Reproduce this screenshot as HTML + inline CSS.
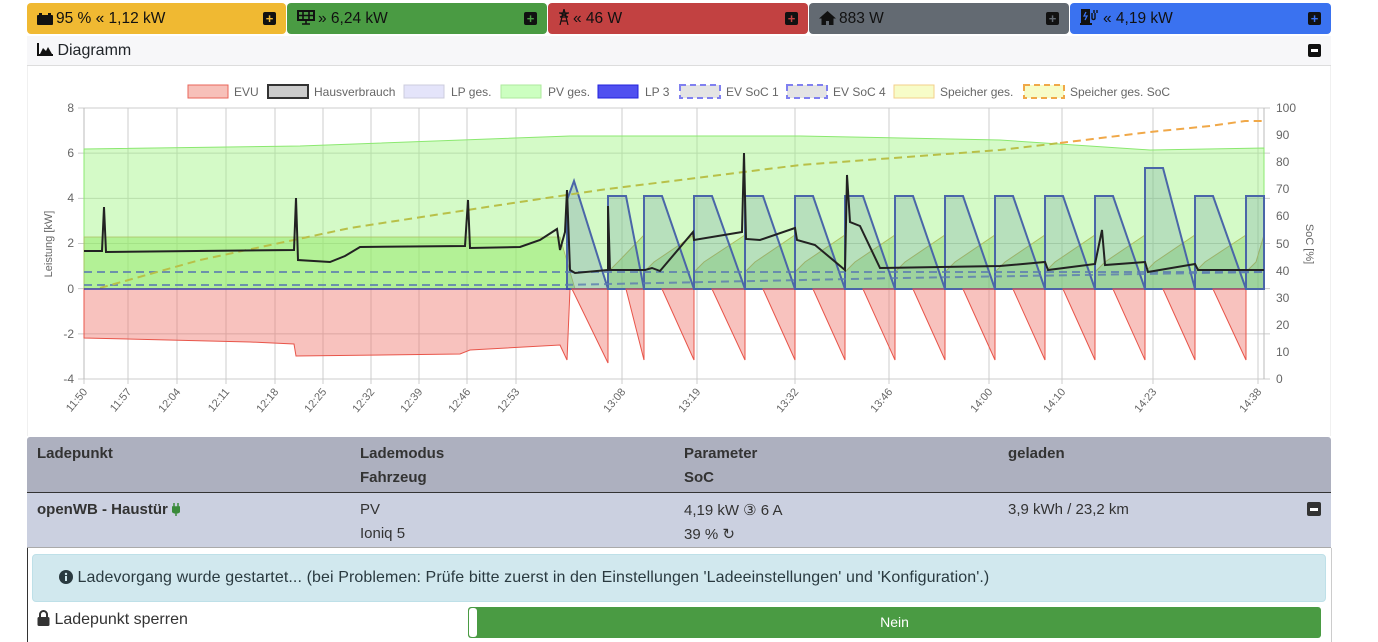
<!DOCTYPE html>
<html><head><meta charset="utf-8">
<style>
*{box-sizing:border-box;margin:0;padding:0}
body{width:1378px;height:642px;overflow:hidden;background:#fff;font-family:"Liberation Sans",sans-serif;color:#212529;position:relative}
.box{position:absolute;top:3px;height:31px;border-radius:4px;font-size:15.5px;line-height:31px;padding-left:10px;color:#111}
.box svg{vertical-align:-2px;margin-right:3px}
.pl{position:absolute;right:10px;top:9px;width:13px;height:13px;background:#111;border-radius:2px;color:#fff;font-size:13px;line-height:13px;text-align:center;font-weight:bold}
.abs{position:absolute}
.th{font-weight:bold;font-size:15px;color:#333}
.td{font-size:15px;color:#333}
</style></head><body>
<div class="box" style="left:27px;width:259px;background:#f0b932"><svg width="16" height="13" viewBox="0 0 16 13"><rect x="0" y="3" width="16" height="10" rx="1" fill="#111"/><rect x="2" y="1" width="3" height="2" fill="#111"/><rect x="11" y="1" width="3" height="2" fill="#111"/></svg>95 % « 1,12 kW<span class="pl" style="color:#f0b932">+</span></div>
<div class="box" style="left:287px;width:260px;background:#4a9b43"><svg width="18" height="15" viewBox="0 0 18 15"><rect x="1" y="1" width="16" height="9" fill="none" stroke="#111" stroke-width="2"/><path d="M6 1v9M12 1v9M1 5.5h16M9 10v4M5 14h8" stroke="#111" stroke-width="1.6"/></svg>» 6,24 kW<span class="pl" style="color:#4a9b43">+</span></div>
<div class="box" style="left:548px;width:260px;background:#c24141"><svg width="12" height="16" viewBox="0 0 12 16"><path d="M6 0L2 16M6 0l4 16M1 4h10M2 8h8M3 12h6M2 4l8 4M10 4l-8 4" stroke="#111" stroke-width="1.2" fill="none"/></svg>« 46 W<span class="pl" style="color:#c24141">+</span></div>
<div class="box" style="left:809px;width:260px;background:#636a72"><svg width="17" height="14" viewBox="0 0 17 14"><path d="M8.5 0L0 7.5h2.5V14h4.5V10h3v4h4.5V7.5H17z" fill="#111"/></svg>883 W<span class="pl" style="color:#636a72">+</span></div>
<div class="box" style="left:1070px;width:261px;background:#3a72f0"><svg width="20" height="16" viewBox="0 0 20 16"><rect x="1" y="0" width="9" height="14" fill="#111"/><rect x="0" y="14" width="12" height="2" fill="#111"/><path d="M6 3L4 7h3l-2 4" stroke="#3a72f0" stroke-width="1.3" fill="none"/><path d="M12 4v5c0 2 3 2 3 0V4M14 1v3M17 1v3" stroke="#111" stroke-width="1.4" fill="none"/></svg>« 4,19 kW<span class="pl" style="color:#3a72f0">+</span></div>

<div class="abs" style="left:27px;top:36px;width:1304px;height:30px;background:#f7f7f9;border-bottom:1px solid #ddd;font-size:16px;line-height:29px;padding-left:10px"><svg width="16" height="13" viewBox="0 0 16 13" style="vertical-align:-1px"><path d="M1 0v12h15" stroke="#111" stroke-width="2" fill="none"/><path d="M3 11l3-6 3 3 2-4 4 7z" fill="#111"/></svg> Diagramm<span class="abs" style="right:10px;top:8px;width:13px;height:13px;background:#111;border-radius:2px"><span class="abs" style="left:3px;top:5px;width:7px;height:3px;background:#fff"></span></span></div>
<div class="abs" style="left:27px;top:66px;width:1304px;height:370px;border-left:1px solid #f0f0f0;border-right:1px solid #f0f0f0"></div>

<svg class="abs" style="left:0;top:0" width="1378" height="436" font-family="Liberation Sans" font-size="12" fill="#666">
<g font-size="12">
<rect x="188" y="85" width="40" height="13" fill="#f7c0b9" stroke="#e8665a"/><text x="234" y="96">EVU</text>
<rect x="268" y="85" width="40" height="13" fill="#ccc" stroke="#333" stroke-width="2"/><text x="314" y="96">Hausverbrauch</text>
<rect x="404" y="85" width="40" height="13" fill="#e4e4fa" stroke="#ccd"/><text x="451" y="96">LP ges.</text>
<rect x="501" y="85" width="40" height="13" fill="#ccffc0" stroke="#aee89e"/><text x="548" y="96">PV ges.</text>
<rect x="598" y="85" width="40" height="13" fill="#5050f0" stroke="#2222dd"/><text x="645" y="96">LP 3</text>
<rect x="680" y="85" width="40" height="13" fill="#e4e4e4" stroke="#8080f0" stroke-dasharray="6,4" stroke-width="2"/><text x="726" y="96">EV SoC 1</text>
<rect x="787" y="85" width="40" height="13" fill="#e4e4e4" stroke="#8080f0" stroke-dasharray="6,4" stroke-width="2"/><text x="833" y="96">EV SoC 4</text>
<rect x="894" y="85" width="40" height="13" fill="#f7fcc8" stroke="#f3cf8a"/><text x="940" y="96">Speicher ges.</text>
<rect x="1024" y="85" width="40" height="13" fill="#f7fcc8" stroke="#f0a848" stroke-dasharray="6,4" stroke-width="2"/><text x="1070" y="96">Speicher ges. SoC</text>
</g>
<g stroke="#ccc" stroke-width="1" id="grid"></g>
<g id="plot"></g>
<g text-anchor="end">
<text x="74" y="112">8</text><text x="74" y="157">6</text><text x="74" y="202">4</text><text x="74" y="247">2</text><text x="74" y="293">0</text><text x="74" y="338">-2</text><text x="74" y="383">-4</text>
</g>
<g>
<text x="1276" y="112">100</text><text x="1276" y="139">90</text><text x="1276" y="166">80</text><text x="1276" y="193">70</text><text x="1276" y="220">60</text><text x="1276" y="248">50</text><text x="1276" y="275">40</text><text x="1276" y="302">30</text><text x="1276" y="329">20</text><text x="1276" y="356">10</text><text x="1276" y="383">0</text>
</g>
<text transform="translate(52,244) rotate(-90)" text-anchor="middle" font-size="11">Leistung [kW]</text>
<text transform="translate(1306,244) rotate(90)" text-anchor="middle" font-size="11">SoC [%]</text>
<g id="xl" text-anchor="end" font-size="11"></g>
</svg>

<div class="abs" style="left:27px;top:437px;width:1304px;height:56px;background:#adb0bf;border-radius:3px 3px 0 0;border-bottom:1px solid #333"></div>
<div class="abs th" style="left:37px;top:445px">Ladepunkt</div>
<div class="abs th" style="left:360px;top:445px">Lademodus</div>
<div class="abs th" style="left:360px;top:469px">Fahrzeug</div>
<div class="abs th" style="left:684px;top:445px">Parameter</div>
<div class="abs th" style="left:684px;top:469px">SoC</div>
<div class="abs th" style="left:1008px;top:445px">geladen</div>
<div class="abs" style="left:27px;top:493px;width:1304px;height:55px;background:#cbd0e0;border-bottom:1px solid #aaa"></div>
<div class="abs th" style="left:37px;top:501px">openWB - Haustür <svg width="8" height="13" viewBox="0 0 8 13" style="vertical-align:-2px"><path d="M2 0v4M6 0v4M0 4h8v3c0 2-2 3-4 3s-4-1-4-3zM4 10v3" stroke="#3a8a3a" stroke-width="1.5" fill="#3a8a3a"/></svg></div>
<div class="abs td" style="left:360px;top:501px">PV</div>
<div class="abs td" style="left:360px;top:525px">Ioniq 5</div>
<div class="abs td" style="left:684px;top:501px">4,19 kW ③ 6 A</div>
<div class="abs td" style="left:684px;top:525px">39 % ↻</div>
<div class="abs td" style="left:1008px;top:501px">3,9 kWh / 23,2 km</div>
<div class="abs" style="left:1307px;top:502px;width:14px;height:14px;background:#333;border-radius:2px"><span class="abs" style="left:3px;top:6px;width:8px;height:3px;background:#fff"></span></div>
<div class="abs" style="left:27px;top:548px;width:1px;height:94px;background:#333"></div>
<div class="abs" style="left:1331px;top:548px;width:1px;height:94px;background:#ccc"></div>
<div class="abs" style="left:32px;top:554px;width:1294px;height:48px;background:#d1e8ee;border:1px solid #bee0e8;border-radius:4px;font-size:16px;letter-spacing:0.1px;line-height:46px;padding-left:26px;color:#2a3a40"><svg width="14" height="14" viewBox="0 0 14 14" style="vertical-align:-2px"><circle cx="7" cy="7" r="7" fill="#2a3a40"/><rect x="6" y="6" width="2" height="5" fill="#d1e8ee"/><circle cx="7" cy="4" r="1.2" fill="#d1e8ee"/></svg> Ladevorgang wurde gestartet... (bei Problemen: Prüfe bitte zuerst in den Einstellungen 'Ladeeinstellungen' und 'Konfiguration'.)</div>
<div class="abs" style="left:37px;top:610px;font-size:16px;color:#333"><svg width="13" height="16" viewBox="0 0 13 16" style="vertical-align:-2px"><path d="M3 7V4.5a3.5 3.5 0 0 1 7 0V7" stroke="#333" stroke-width="2" fill="none"/><rect x="0.5" y="7" width="12" height="9" rx="1.5" fill="#333"/></svg> Ladepunkt sperren</div>
<div class="abs" style="left:468px;top:607px;width:853px;height:31px;background:#4a9b43;border-radius:3px;color:#fff;font-size:14px;text-align:center;line-height:31px">Nein</div>
<div class="abs" style="left:469px;top:608px;width:8px;height:29px;background:#fff;border-radius:3px"></div>

<script>
(function(){
var ns="http://www.w3.org/2000/svg";
function el(p,t,a){var e=document.createElementNS(ns,t);for(var k in a)e.setAttribute(k,a[k]);p.appendChild(e);return e;}
var g=document.getElementById('grid'),pl=document.getElementById('plot'),xl=document.getElementById('xl');
var xs=[[84,'11:50'],[128,'11:57'],[177,'12:04'],[226,'12:11'],[275,'12:18'],[323,'12:25'],[371,'12:32'],[419,'12:39'],[467,'12:46'],[516,'12:53'],[622,'13:08'],[697,'13:19'],[795,'13:32'],[889,'13:46'],[989,'14:00'],[1062,'14:10'],[1153,'14:23'],[1258,'14:38']];
for(var i=0;i<7;i++){var y=108+i*45.17;el(g,'line',{x1:78,x2:1270,y1:y,y2:y});}
xs.forEach(function(a){el(g,'line',{x1:a[0],x2:a[0],y1:108,y2:384});var t=el(xl,'text',{transform:'translate('+(a[0]+4)+',392) rotate(-50)'});t.textContent=a[1];});
el(g,'line',{x1:84,x2:84,y1:108,y2:379,stroke:'#bbb'});
el(g,'line',{x1:1264,x2:1264,y1:108,y2:379,stroke:'#bbb'});
el(pl,'path',{d:'M84,289 L84,149 L300,146 L570,136 L800,136 L1000,140 L1150,150 L1264,148 L1264,289Z',fill:'rgba(160,245,130,0.45)',stroke:'#8be870'});
el(pl,'path',{d:'M84,289 L84,237 L560,237 L575,289Z',fill:'rgba(140,230,90,0.45)',stroke:'#aac060','stroke-width':0.8});
el(pl,'path',{d:'M84,289 L84,338 L250,342 L294,344 L296,356 L460,354 L470,350 L560,345 L567,360 L570,289Z',fill:'rgba(240,120,110,0.45)',stroke:'#e8554a','stroke-width':1});
var st=[608,644,694,745,795,845,895,945,995,1045,1095,1145,1195,1246,1296];
el(pl,'path',{d:'M567,289 L567,200 L574,181 L608,289Z',fill:'rgba(80,120,160,0.25)',stroke:'#4a66a8','stroke-width':2});
el(pl,'path',{d:'M572,289 L608,363 L608,289Z',fill:'rgba(240,120,110,0.45)',stroke:'#e8554a','stroke-width':1});
for(var i=0;i<st.length-1;i++){var x=st[i],n=Math.min(st[i+1],1264),tp=(x==1145?168:196);
 var d='M'+x+',289 L'+x+','+tp+' L'+(x+18)+','+tp+' L'+n+','+(n==1264?tp:289);
 if(n==1264)d+=' L1264,289';
 el(pl,'path',{d:'M'+x+',289 L'+x+',272 L'+(x+10)+',262 L'+n+',235 L'+n+',289Z',fill:'rgba(120,200,90,0.35)',stroke:'#b0c060','stroke-width':1});
 el(pl,'path',{d:d+'Z',fill:'rgba(80,130,150,0.22)',stroke:'#4a66a8','stroke-width':2});
 if(n<1264)el(pl,'path',{d:'M'+(x+18)+',289 L'+n+',360 L'+n+',289Z',fill:'rgba(240,120,110,0.45)',stroke:'#e8554a','stroke-width':1});
}
el(pl,'path',{d:'M84,272 L1264,272',stroke:'#5a7ab0','stroke-width':2,'stroke-dasharray':'8,5',fill:'none',opacity:.8});
el(pl,'path',{d:'M84,285 L560,285 L900,278 L1264,272',stroke:'#5a7ab0','stroke-width':2,'stroke-dasharray':'8,5',fill:'none',opacity:.8});
el(pl,'path',{d:'M100,288 L200,260 L350,228 L500,205 L600,190 L800,165 L1000,150 L1060,143',stroke:'#b8c048','stroke-width':2,'stroke-dasharray':'8,5',fill:'none'});
el(pl,'path',{d:'M1060,143 L1150,132 L1210,126 L1245,121 L1264,121',stroke:'#f0a848','stroke-width':2,'stroke-dasharray':'8,5',fill:'none'});
var h='M84,251 L102,251 L104,207 L106,252 L294,250 L296,198 L298,260 L330,262 L345,256 L360,247 L465,246 L468,200 L470,248 L520,247 L540,240 L557,229 L560,250 L565,232 L567,190 L570,270 L575,273 L608,270 L608,206 L610,270 L645,270 L652,268 L660,271 L693,232 L694,240 L742,232 L744,153 L746,239 L760,240 L795,228 L797,240 L815,245 L845,270 L847,175 L850,222 L860,226 L880,268 L1000,266 L1045,262 L1048,270 L1095,264 L1102,230 L1105,265 L1145,262 L1148,272 L1195,264 L1198,270 L1264,270';
el(pl,'path',{d:h,fill:'none',stroke:'#222','stroke-width':2});
el(pl,'line',{x1:84,x2:570,y1:289,y2:289,stroke:'#3d3da8','stroke-width':1.5});
})();
</script>
</body></html>
